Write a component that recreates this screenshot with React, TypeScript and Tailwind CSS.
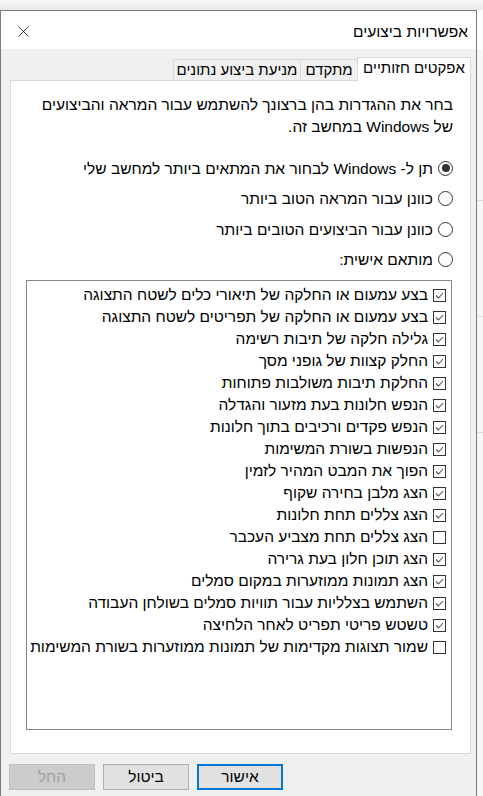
import { X } from "lucide-react"

const effects: [string, boolean][] = [
  ["בצע עמעום או החלקה של תיאורי כלים לשטח התצוגה", true],
  ["בצע עמעום או החלקה של תפריטים לשטח התצוגה", true],
  ["גלילה חלקה של תיבות רשימה", true],
  ["החלק קצוות של גופני מסך", true],
  ["החלקת תיבות משולבות פתוחות", true],
  ["הנפש חלונות בעת מזעור והגדלה", true],
  ["הנפש פקדים ורכיבים בתוך חלונות", true],
  ["הנפשות בשורת המשימות", true],
  ["הפוך את המבט המהיר לזמין", true],
  ["הצג מלבן בחירה שקוף", true],
  ["הצג צללים תחת חלונות", true],
  ["הצג צללים תחת מצביע העכבר", false],
  ["הצג תוכן חלון בעת גרירה", true],
  ["הצג תמונות ממוזערות במקום סמלים", true],
  ["השתמש בצלליות עבור תוויות סמלים בשולחן העבודה", true],
  ["טשטש פריטי תפריט לאחר הלחיצה", true],
  ["שמור תצוגות מקדימות של תמונות ממוזערות בשורת המשימות", false],
]

const radios = [
  "תן ל- Windows לבחור את המתאים ביותר למחשב שלי",
  "כוונן עבור המראה הטוב ביותר",
  "כוונן עבור הביצועים הטובים ביותר",
  "מותאם אישית:",
]

function Radio({ checked }: { checked: boolean }) {
  return (
    <span className="w-[15px] h-[15px] rounded-full border border-[#333] flex items-center justify-center shrink-0 bg-white">
      {checked && <span className="w-[8px] h-[8px] rounded-full bg-[#333]" />}
    </span>
  )
}

function Check({ checked }: { checked: boolean }) {
  return (
    <span className="w-[13px] h-[13px] border border-[#333] bg-white shrink-0 flex items-center justify-center">
      {checked && (
        <svg width="11" height="11" viewBox="0 0 11 11">
          <polyline points="2,5.5 4.5,8 9,3" fill="none" stroke="#555" strokeWidth="1.1" />
        </svg>
      )}
    </span>
  )
}

export default function App() {
  return (
    <div
      className="w-[483px] h-[796px] bg-[#f2f2f2] flex flex-col text-black text-[15.5px]"
      style={{ fontFamily: '"Liberation Sans", "DejaVu Sans", sans-serif' }}
    >
      <div className="h-[10px] shrink-0 bg-gradient-to-b from-[#f7f7f7] to-[#e9e9e9]" />
      <div className="flex flex-1">
        <div dir="rtl" className="w-[477px] border-t border-l border-r border-[#7a7a7a] flex flex-col">
          <div className="h-[38px] bg-white flex items-center justify-between pr-[8px] pl-[13px] pt-[3px]">
            <span>אפשרויות ביצועים</span>
            <X className="w-[19px] h-[19px] text-black" strokeWidth={1} />
          </div>
          <div className="flex-1 bg-[#f0f0f0] flex flex-col pr-[5px] pl-[9px] pt-[7px]">
            <div className="flex items-end h-[24px] text-[15px]">
              <div className="w-[114px] h-[24px] bg-white border border-b-0 border-[#d9d9d9] flex items-center justify-center relative z-10 -mb-px pb-[2px]">
                אפקטים חזותיים
              </div>
              <div className="w-[57px] h-[21px] border border-r-0 border-b-0 border-[#d9d9d9] flex items-center justify-center">
                מתקדם
              </div>
              <div className="w-[127px] h-[21px] border border-r-0 border-b-0 border-[#d9d9d9] flex items-center justify-center">
                מניעת ביצוע נתונים
              </div>
            </div>
            <div className="h-[674px] bg-white border border-[#d9d9d9] flex flex-col pr-[17px] pl-[15px] pt-[13px]">
              <p className="leading-[22px]">
                בחר את ההגדרות בהן ברצונך להשתמש עבור המראה והביצועים של Windows במחשב זה.
              </p>
              <div className="flex flex-col mt-[15px]">
                {radios.map((r, i) => (
                  <div key={r} className="flex items-center gap-[5px] h-[30.5px]">
                    <Radio checked={i === 0} />
                    <span>{r}</span>
                  </div>
                ))}
              </div>
              <div className="mt-[5px] h-[450px] border border-[#828790] flex flex-col pt-[3px] pr-[5px] mr-[1px]">
                {effects.map(([t, c]) => (
                  <div key={t} className="flex items-center gap-[5px] h-[22px] whitespace-nowrap">
                    <Check checked={c} />
                    <span>{t}</span>
                  </div>
                ))}
              </div>
            </div>
            <div dir="ltr" className="flex gap-[8px] mt-[10px] -ml-[1px]">
              <div className="w-[86px] h-[26px] bg-[#cccccc] border border-[#bfbfbf] text-[#a0a0a0] flex items-center justify-center">
                החל
              </div>
              <div className="w-[86px] h-[26px] bg-[#e1e1e1] border border-[#adadad] flex items-center justify-center">
                ביטול
              </div>
              <div className="w-[86px] h-[26px] bg-[#e1e1e1] border-2 border-[#0078d7] flex items-center justify-center">
                אישור
              </div>
            </div>
          </div>
        </div>
        <div className="flex-1 bg-[#f7f7f7] flex flex-col">
          <div className="h-[40px] bg-white" />
          <div className="h-px bg-[#dcdcdc] mt-[150px]" />
          <div className="h-px bg-[#dcdcdc] mt-[115px]" />
          <div className="h-px bg-[#dcdcdc] mt-[115px]" />
        </div>
      </div>
    </div>
  )
}
